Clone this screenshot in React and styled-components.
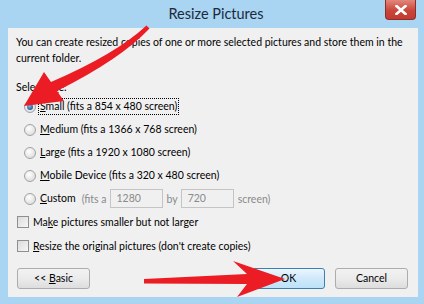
import React from 'react';
import styled, { createGlobalStyle } from 'styled-components';

const GlobalStyle = createGlobalStyle`
	html, body {
		margin: 0;
		padding: 0;
		background: #a9d4f2;
	}
	* {
		box-sizing: border-box;
	}
`;

const sizes = [
	{ key: 'S', rest: 'mall (fits a 854 x 480 screen)', checked: true },
	{ key: 'M', rest: 'edium (fits a 1366 x 768 screen)' },
	{ key: 'L', rest: 'arge (fits a 1920 x 1080 screen)' },
	{ key: 'M', rest: 'obile Device (fits a 320 x 480 screen)' },
];

function App() {
	return (
		<>
			<GlobalStyle />
			<Frame>
				<TitleBar>
					<span />
					<Title>Resize Pictures</Title>
					<CloseButton>
						<svg width="12" height="10" viewBox="0 0 12 10">
							<path d="M1.5 1 L10.5 9 M10.5 1 L1.5 9" stroke="#fff" strokeWidth="2.6" strokeLinecap="square" />
						</svg>
					</CloseButton>
				</TitleBar>

				<Panel>
					<Intro>
						You can create resized copies of one or more selected pictures and store them in the current folder.
					</Intro>
					<GroupLabel>
						Select si<u>z</u>e:
					</GroupLabel>

					<RadioList>
						{sizes.map((s, i) => (
							<RadioRow key={i}>
								<Radio checked={s.checked} />
								<Label focused={s.checked}>
									<u>{s.key}</u>
									{s.rest}
								</Label>
							</RadioRow>
						))}
						<RadioRow>
							<Radio />
							<Label>
								<u>C</u>ustom
							</Label>
							<Muted>(fits a</Muted>
							<Field>1280</Field>
							<Muted>by</Muted>
							<Field>720</Field>
							<Muted>screen)</Muted>
						</RadioRow>
					</RadioList>

					<CheckRow>
						<CheckBox />
						<Label>
							Ma<u>k</u>e pictures smaller but not larger
						</Label>
					</CheckRow>
					<CheckRow>
						<CheckBox />
						<Label>
							<u>R</u>esize the original pictures (don't create copies)
						</Label>
					</CheckRow>

					<ButtonBar>
						<Button>
							<span>
								{'<< '}
								<u>B</u>asic
							</span>
						</Button>
						<Spacer />
						<Button primary>OK</Button>
						<Button>Cancel</Button>
					</ButtonBar>
				</Panel>

				<Annotations width="424" height="304" viewBox="0 0 424 304">
					<path
						fill="#ec1c24"
						d="M24 106 L64 101 L57 91 Q121 59 149.5 28.5 L146.5 25.5 Q116 54 51 82 L44 72 Z"
					/>
					<polygon
						fill="#ec1c24"
						points="285,279 237,297 247,284 144,283.5 144,279 247,274 233,261"
					/>
				</Annotations>
			</Frame>
		</>
	);
}

const Frame = styled.div`
	position: relative;
	width: 424px;
	height: 304px;
	background: #a9d4f2;
	display: flex;
	flex-direction: column;
	padding: 0 6px 7px 8px;
	font-family: 'Segoe UI', Lato, sans-serif;
	font-size: 10.5px;
	color: #000;
`;

const TitleBar = styled.div`
	height: 30px;
	display: grid;
	grid-template-columns: 1fr auto 1fr;
	align-items: start;
`;

const Title = styled.div`
	padding-top: 4px;
	font-size: 14.5px;
	line-height: 20px;
	color: #1b2a3c;
	margin-left: 6px;
`;

const CloseButton = styled.div`
	justify-self: end;
	margin-right: 2px;
	width: 31px;
	height: 20px;
	display: flex;
	align-items: center;
	justify-content: center;
	background: linear-gradient(#e3877b, #c9463a 55%, #c23a2f);
	border: 1px solid #8f2d24;
	border-top: none;
	border-radius: 0 0 4px 4px;
`;

const Panel = styled.div`
	flex: 1;
	background: #f0f0f0;
	display: flex;
	flex-direction: column;
	padding: 6px 8px 8px 8px;
`;

const Intro = styled.p`
	margin: 0;
	line-height: 16px;
`;

const GroupLabel = styled.div`
	margin-top: 13px;
	line-height: 16px;
`;

const RadioList = styled.div`
	display: flex;
	flex-direction: column;
	padding-left: 8px;
`;

const RadioRow = styled.div`
	height: 23px;
	display: flex;
	align-items: center;
`;

const Radio = styled.span`
	width: 12px;
	height: 12px;
	border-radius: 50%;
	border: 1px solid #a2a2a2;
	background: radial-gradient(circle at 40% 35%, #ffffff, #dcdcdc 80%);
	margin-right: 2px;
	display: flex;
	align-items: center;
	justify-content: center;
	&::after {
		content: '';
		display: ${({ checked }) => (checked ? 'block' : 'none')};
		width: 6px;
		height: 6px;
		border-radius: 50%;
		background: radial-gradient(circle at 40% 35%, #7fb8e8, #1a5a9a 75%);
	}
`;

const Label = styled.span`
	line-height: 15px;
	padding: 0 1px;
	border: 1px dotted ${({ focused }) => (focused ? '#000' : 'transparent')};
`;

const Muted = styled.span`
	color: #8a8a8a;
	margin: 0 3px 0 4px;
`;

const Field = styled.span`
	width: 53px;
	height: 19px;
	border: 1px solid #c4c4c4;
	background: #f0f0f0;
	color: #8a8a8a;
	padding-left: 6px;
	line-height: 17px;
`;

const CheckRow = styled.div`
	height: 24px;
	display: flex;
	align-items: center;
	padding-left: 1px;
`;

const CheckBox = styled.span`
	width: 12px;
	height: 12px;
	border: 1px solid #8f8f8f;
	background: linear-gradient(135deg, #dcdcdc, #f6f6f6);
	margin-right: 2px;
`;

const ButtonBar = styled.div`
	margin-top: 10px;
	display: flex;
	gap: 10px;
	padding-left: 1px;
	padding-right: 2px;
`;

const Spacer = styled.div`
	flex: 1;
`;

const Button = styled.div`
	width: 73px;
	height: 21px;
	display: flex;
	align-items: center;
	justify-content: center;
	border-radius: 3px;
	border: 1px solid ${({ primary }) => (primary ? '#3c7fb1' : '#acacac')};
	background: ${({ primary }) =>
		primary ? 'linear-gradient(#ecf6fd, #cfe9fb 50%, #bde2f8)' : 'linear-gradient(#f2f2f2, #ebebeb 50%, #dddddd)'};
	line-height: 15px;
`;

const Annotations = styled.svg`
	position: absolute;
	left: 0;
	top: 0;
	pointer-events: none;
`;

export default App;
